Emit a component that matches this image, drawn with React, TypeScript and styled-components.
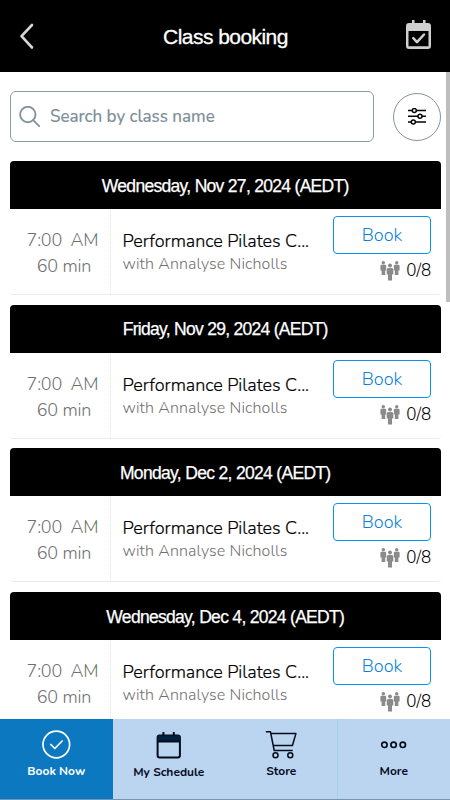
import React from "react";
import styled, { createGlobalStyle } from "styled-components";

const Global = createGlobalStyle`
  * { box-sizing: border-box; }
  html, body { margin: 0; padding: 0; overflow: hidden; background: #fff; }
  button { font: inherit; }
`;

const rounded = `Nunito, Lato, "Noto Sans", sans-serif`;
const grotesk = `"Liberation Sans", Arial, sans-serif`;

const Screen = styled.div`
  width: 450px;
  height: 800px;
  display: flex;
  flex-direction: column;
  overflow: hidden;
  background: #fff;
  font-family: ${rounded};
`;

const Header = styled.header`
  flex: none;
  height: 72px;
  padding: 0 16px 0 17px;
  display: grid;
  grid-template-columns: 30px 1fr 30px;
  align-items: center;
  background: #000;
`;

const Title = styled.h1`
  margin: 0;
  padding-top: 1px;
  text-align: center;
  white-space: nowrap;
  color: #fff;
  font: 400 21px/24px ${grotesk};
  letter-spacing: -0.55px;
  -webkit-text-stroke: 0.3px #fff;
`;

const IconButton = styled.button`
  padding: 0;
  border: 0;
  background: none;
  display: flex;
  svg { display: block; }
`;

const Content = styled.main`
  flex: 1;
  min-height: 0;
  display: flex;
  overflow: hidden;
`;

const Page = styled.div`
  flex: 1;
  min-width: 0;
  padding: 19px 4px 0 9.5px;
`;

const ScrollTrack = styled.div`
  flex: none;
  width: 4.5px;
`;

const ScrollThumb = styled.div`
  height: 230px;
  background: #bebebe;
`;

const SearchRow = styled.div`
  display: flex;
  align-items: center;
  gap: 19px;
  height: 51px;
`;

const SearchBox = styled.label`
  width: 364px;
  height: 51px;
  padding-left: 8px;
  display: flex;
  align-items: center;
  gap: 9.5px;
  border: 1px solid #8d9da8;
  border-radius: 6px;
`;

const SearchHint = styled.span`
  color: #7d8f99;
  font: 500 17px/24px ${rounded};
  letter-spacing: -0.03px;
  -webkit-text-stroke: 0.1px #7d8f99;
`;

const FilterButton = styled.button`
  flex: none;
  width: 48px;
  height: 48px;
  padding: 0;
  display: flex;
  align-items: center;
  justify-content: center;
  border: 1px solid #84939d;
  border-radius: 50%;
  background: #fff;
`;

const ClassList = styled.div`
  width: 431.5px;
  margin-top: 19px;
  display: flex;
  flex-direction: column;
  gap: 9.7px;
`;

const Card = styled.section`
  flex: none;
  height: 134px;
  border-radius: 4px;
  overflow: hidden;
  border-bottom: 1px solid #e8edec;
`;

const DayBar = styled.h2`
  margin: 0;
  height: 48px;
  display: flex;
  align-items: center;
  justify-content: center;
  background: #000;
  color: #fff;
  white-space: nowrap;
  font: 400 17.5px/24px ${grotesk};
  -webkit-text-stroke: 0.25px #fff;
`;

const DayText = styled.span<{ $tracking: number }>`
  padding-top: 1px;
  letter-spacing: ${(p) => p.$tracking}px;
`;

const Row = styled.div`
  height: 85px;
  display: grid;
  grid-template-columns: 101px 1fr 108px;
`;

const TimeCell = styled.div`
  border-right: 1px dotted #e2e5e5;
  padding: 18px 0 0 6px;
  display: flex;
  flex-direction: column;
  align-items: center;
  color: #707070;
  font: 300 18px/26px ${rounded};
`;

const Clock = styled.div`
  display: flex;
  gap: 8.5px;
  letter-spacing: -0.2px;
`;

const Duration = styled.div`
  padding-left: 3px;
  letter-spacing: -0.15px;
`;

const InfoCell = styled.div`
  padding: 20px 0 0 12px;
  white-space: nowrap;
`;

const ClassName = styled.div`
  color: #000;
  font: 300 18px/24px ${rounded};
  letter-spacing: -0.05px;
  -webkit-text-stroke: 0.2px #000;
`;

const Teacher = styled.div`
  color: #707070;
  font: 300 16px/22px ${rounded};
  letter-spacing: 0.1px;
`;

const ActionCell = styled.div`
  padding: 7px 10px 0 0;
  display: flex;
  flex-direction: column;
  align-items: flex-end;
`;

const BookButton = styled.button`
  width: 98px;
  height: 38px;
  padding: 0;
  border: 1px solid #0894ec;
  border-radius: 4px;
  background: #fff;
  color: #0d7fdc;
  font: 300 18px/24px ${rounded};
`;

const Spots = styled.div`
  margin-top: 6px;
  display: flex;
  align-items: center;
  gap: 6.5px;
  color: #000;
  font: 300 17px/22px ${rounded};
  letter-spacing: -0.1px;
  svg { display: block; }
`;

const TabBar = styled.nav`
  flex: none;
  height: 81.5px;
  display: grid;
  grid-template-columns: repeat(4, 1fr);
  border-bottom: 1px solid #7793b8;
`;

const Tab = styled.button<{ $active?: boolean }>`
  padding: 11px 0 0;
  border: 0;
  border-right: 1px solid ${(p) => (p.$active ? "#0b78c0" : "#a9cdea")};
  background: ${(p) => (p.$active ? "#0b78c0" : "#bbd5f1")};
  color: ${(p) => (p.$active ? "#fff" : "#050c1c")};
  display: flex;
  flex-direction: column;
  align-items: center;
  &:last-child, &:nth-child(2) { border-right-color: #bbd5f1; }
  svg { display: block; }
`;

const TabLabel = styled.span<{ $drop?: number }>`
  margin-top: ${(p) => 3 + (p.$drop ?? 0)}px;
  padding-left: 1px;
  font: 700 12px/16px ${rounded};
`;

const BackIcon = () => (
  <svg width="18" height="28" viewBox="0 0 18 28" fill="none" stroke="#d6d6d6" strokeWidth="2.6" strokeLinecap="round" strokeLinejoin="round">
    <path d="M15 3 4.5 14.2 15 25.5" />
  </svg>
);

const CalendarCheck = () => (
  <svg width="30" height="32" viewBox="0 0 30 32">
    <g transform="translate(2 -1.5)">
      <path fillRule="evenodd" fill="#cfcfcf" d="M6 1.5h2.500v3h8.500v-3h2.500v3h2.500A3 3 0 0 1 25 7.500v20a3 3 0 0 1-3 3H3a3 3 0 0 1-3-3v-20a3 3 0 0 1 3-3h3zM2.500 12.500v15.300h20v-15.300z" />
      <path d="m7.300 19.700 3.700 4 7-7.700" fill="none" stroke="#cfcfcf" strokeWidth="2.500" strokeLinecap="round" strokeLinejoin="round" />
    </g>
  </svg>
);

const SearchIcon = () => (
  <svg width="22" height="22" viewBox="0 0 22 22" fill="none" stroke="#84959f" strokeWidth="1.900" strokeLinecap="round">
    <circle cx="8.800" cy="8.500" r="7.700" />
    <path d="m14.200 14.200 6 6" />
  </svg>
);

const SlidersIcon = () => (
  <svg width="20" height="18" viewBox="0 0 20 18" fill="#fff" stroke="#050505" strokeWidth="1.500">
    <path d="M1 2.500h18M1 8.300h18M1 14.100h18" />
    <circle cx="7.300" cy="2.500" r="2" />
    <circle cx="13" cy="8.300" r="2" />
    <circle cx="6.300" cy="14.100" r="2" />
  </svg>
);

const PeopleIcon = () => (
  <svg width="20" height="20" viewBox="0 0 20 20" fill="#8a8a8a">
    <circle cx="3.300" cy="1.800" r="1.700" />
    <path d="M1.400 3.800h3.800q1 0 1 1.200v4.500H5.200V14H1.600V9.500H.400V5Q.400 3.800 1.400 3.800z" />
    <circle cx="16.700" cy="1.800" r="1.700" />
    <path d="M14.800 3.800h3.800q1 0 1 1.200v4.500h-1.200V14h-3.600V9.500h-1V5q0-1.200 1-1.200z" />
    <circle cx="10" cy="4.500" r="2" />
    <path d="M8.200 7h3.600q1.500 0 1.500 1.500V13.500H12V19.500H8V13.500H6.700V8.500Q6.700 7 8.200 7z" />
  </svg>
);

const CheckCircle = () => (
  <svg width="30" height="30" viewBox="0 0 30 30" fill="none" stroke="#fff" strokeWidth="1.700" strokeLinecap="round" strokeLinejoin="round">
    <circle cx="15.300" cy="14.500" r="13.300" />
    <path d="m9.800 14.500 4 4 7.300-7.500" />
  </svg>
);

const CalendarIcon = () => (
  <svg width="26" height="30" viewBox="0 0 26 30">
    <rect x="2.600" y="5.500" width="22.300" height="22" rx="2" fill="none" stroke="#020b1c" strokeWidth="2" />
    <path d="M2.600 5.500h22.300v5.500H2.600z" fill="#04203f" />
    <path d="M2.100 11.500h23M8.400 2V5.500M18.800 2V5.500" stroke="#020b1c" strokeWidth="2" />
  </svg>
);

const CartIcon = () => (
  <svg width="32" height="30" viewBox="0 0 32 30" fill="none" stroke="#030b1a" strokeWidth="1.500" strokeLinejoin="round">
    <path d="M.900 1.800H5.500L9.200 20.500h18.500M5.900 3.600h25l-3.500 11.900H8.300" />
    <circle cx="10.500" cy="25.200" r="2.500" />
    <circle cx="25.300" cy="25.200" r="2.500" />
  </svg>
);

const MoreIcon = () => (
  <svg width="28" height="30" viewBox="0 0 28 30" fill="none" stroke="#030b1a" strokeWidth="1.700">
    <circle cx="5.400" cy="14.800" r="2.700" />
    <circle cx="14.600" cy="14.800" r="2.700" />
    <circle cx="23.800" cy="14.800" r="2.700" />
  </svg>
);

const days = [
  { label: "Wednesday, Nov 27, 2024 (AEDT)", tracking: -0.7 },
  { label: "Friday, Nov 29, 2024 (AEDT)", tracking: -0.72 },
  { label: "Monday, Dec 2, 2024 (AEDT)", tracking: -0.68 },
  { label: "Wednesday, Dec 4, 2024 (AEDT)", tracking: -0.7 },
];

export default function App() {
  return (
    <Screen>
      <Global />
      <Header>
        <IconButton aria-label="Back"><BackIcon /></IconButton>
        <Title>Class booking</Title>
        <IconButton aria-label="Bookings"><CalendarCheck /></IconButton>
      </Header>
      <Content>
        <Page>
          <SearchRow>
            <SearchBox>
              <SearchIcon />
              <SearchHint>Search by class name</SearchHint>
            </SearchBox>
            <FilterButton aria-label="Filters"><SlidersIcon /></FilterButton>
          </SearchRow>
          <ClassList>
            {days.map((day) => (
              <Card key={day.label}>
                <DayBar><DayText $tracking={day.tracking}>{day.label}</DayText></DayBar>
                <Row>
                  <TimeCell>
                    <Clock><span>7:00</span><span>AM</span></Clock>
                    <Duration>60 min</Duration>
                  </TimeCell>
                  <InfoCell>
                    <ClassName>Performance Pilates C...</ClassName>
                    <Teacher>with Annalyse Nicholls</Teacher>
                  </InfoCell>
                  <ActionCell>
                    <BookButton>Book</BookButton>
                    <Spots><PeopleIcon /><span>0/8</span></Spots>
                  </ActionCell>
                </Row>
              </Card>
            ))}
          </ClassList>
        </Page>
        <ScrollTrack><ScrollThumb /></ScrollTrack>
      </Content>
      <TabBar>
        <Tab $active><CheckCircle /><TabLabel>Book Now</TabLabel></Tab>
        <Tab><CalendarIcon /><TabLabel $drop={1.5}>My Schedule</TabLabel></Tab>
        <Tab><CartIcon /><TabLabel>Store</TabLabel></Tab>
        <Tab><MoreIcon /><TabLabel>More</TabLabel></Tab>
      </TabBar>
    </Screen>
  );
}
